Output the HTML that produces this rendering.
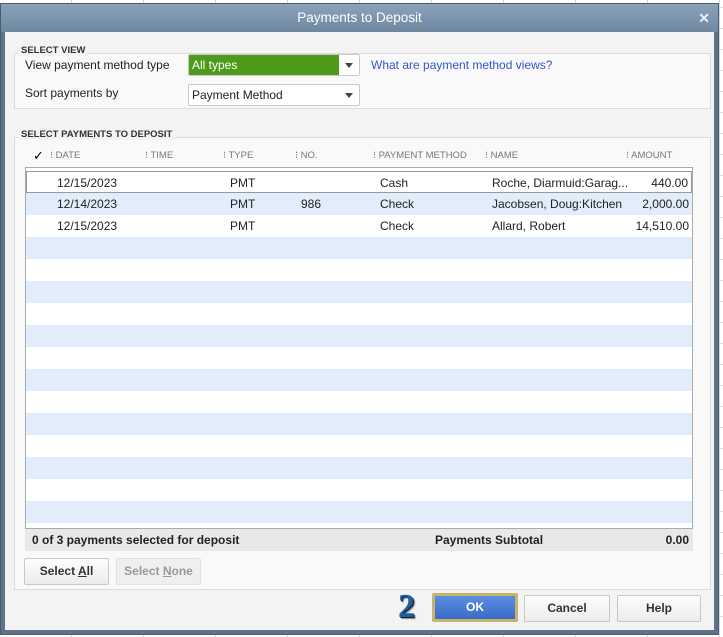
<!DOCTYPE html>
<html><head><style>
*{box-sizing:border-box;margin:0;padding:0}
body{width:723px;height:637px;background:#fff;font-family:"Liberation Sans",Arial,sans-serif;font-size:12px;color:#222;position:relative;overflow:hidden}
.bg{position:absolute;inset:0;background:
repeating-linear-gradient(90deg,transparent 0 71px,#d8d8d8 71px 72px),
repeating-linear-gradient(0deg,transparent 0 20px,#e0e0e0 20px 21px),#fff}
.dlg{position:absolute;left:0;top:3px;width:719px;height:632px;background:#5e7288;border:1px solid #4a5c70}
.title{position:absolute;left:0;top:0;width:100%;height:28px;background:linear-gradient(#8aa3bb,#6f879f);color:#fff;text-align:center;font-size:13.5px;line-height:28px}
.x{position:absolute;right:8px;top:0;font-weight:bold;font-size:14px;color:#e8eef4}
.body{position:absolute;left:4px;top:28px;right:4px;bottom:4px;background:#f3f3f3}
.panel{position:absolute;border:1px solid #dcdcdc;background:#f9f9f9}
.lbl{position:absolute;font-size:9.5px;font-weight:bold;color:#333;background:#f3f3f3;padding:0 3px}
.sel{position:absolute;height:22px;border:1px solid #c8c8c8;background:#fff;border-radius:2px;font-size:12px;line-height:20px;padding-left:3px}
.sel .arr{position:absolute;right:6px;top:8px;width:0;height:0;border-left:4px solid transparent;border-right:4px solid transparent;border-top:5px solid #444}
.hdr{position:absolute;top:150px;font-size:9.5px;color:#777}
.grid{position:absolute;left:25px;top:167px;width:668px;height:362px;border:1px solid #aaa;background:repeating-linear-gradient(#fff 0 4px,#fff 4px 26px,#e1edfb 26px 48px,#fff 48px 48px);overflow:hidden}
.row{position:absolute;left:0;width:100%;height:22px;font-size:12px;line-height:22px}
.row span{position:absolute}
.foot{position:absolute;left:25px;top:529px;width:668px;height:22px;background:#e8e8e8;font-weight:bold;font-size:12px;line-height:22px}
.btn{position:absolute;height:27px;border:1px solid #c8c8c8;border-radius:2px;background:linear-gradient(#fdfdfd,#ececec);text-align:center;line-height:25px;font-size:12px;font-weight:bold;color:#333}
</style></head><body>
<div class="bg"></div>
<div class="dlg">
<div class="title">Payments to Deposit<span class="x">✕</span></div>
<div class="body">
<div class="panel" style="left:9px;top:21px;width:697px;height:56px"></div>
<div class="lbl" style="left:13px;top:13px">SELECT VIEW</div>
<div class="panel" style="left:9px;top:105px;width:697px;height:453px"></div>
<div class="lbl" style="left:13px;top:97px">SELECT PAYMENTS TO DEPOSIT</div>
</div>
</div>
<div style="position:absolute;left:25px;top:58px;font-size:12px">View payment method type</div>
<div class="sel" style="left:188px;top:54px;width:172px;background:#4e9a1a;color:#fff"><span style="background:#4e9a1a">All types</span><span style="position:absolute;right:0;top:0;width:20px;height:20px;background:#fff"></span><span class="arr"></span></div>
<div style="position:absolute;left:371px;top:58px;color:#3355cc">What are payment method views?</div>
<div style="position:absolute;left:25px;top:86px">Sort payments by</div>
<div class="sel" style="left:188px;top:84px;width:172px">Payment Method<span class="arr"></span></div>
<div class="hdr" style="left:33px;top:148px;font-size:13px;color:#000">✓</div>
<div class="hdr" style="left:50px">⁝ DATE</div>
<div class="hdr" style="left:145px">⁝ TIME</div>
<div class="hdr" style="left:223px">⁝ TYPE</div>
<div class="hdr" style="left:295px">⁝ NO.</div>
<div class="hdr" style="left:373px">⁝ PAYMENT METHOD</div>
<div class="hdr" style="left:485px">⁝ NAME</div>
<div class="hdr" style="left:626px">⁝ AMOUNT</div>
<div class="grid" style="background:repeating-linear-gradient(#fff 0 4px,#fff 4px 25px,#e1edfb 25px 47px,#fff 47px 48px);background:linear-gradient(#fff,#fff) 0 0/100% 25px no-repeat,repeating-linear-gradient(#e1edfb 0 22px,#fff 22px 44px) 0 25px/100% 100% no-repeat">
<div class="row" style="top:3px;border:1px solid #999;height:22px"><span style="left:30px">12/15/2023</span><span style="left:203px">PMT</span><span style="left:353px">Cash</span><span style="left:465px">Roche, Diarmuid:Garag...</span><span style="right:3px">440.00</span></div>
<div class="row" style="top:25px"><span style="left:31px">12/14/2023</span><span style="left:204px">PMT</span><span style="left:275px">986</span><span style="left:354px">Check</span><span style="left:466px">Jacobsen, Doug:Kitchen</span><span style="right:3px">2,000.00</span></div>
<div class="row" style="top:47px"><span style="left:31px">12/15/2023</span><span style="left:204px">PMT</span><span style="left:354px">Check</span><span style="left:466px">Allard, Robert</span><span style="right:3px">14,510.00</span></div>
</div>
<div class="foot"><span style="position:absolute;left:7px">0 of 3 payments selected for deposit</span><span style="position:absolute;left:410px">Payments Subtotal</span><span style="position:absolute;right:4px">0.00</span></div>
<div class="btn" style="left:24px;top:558px;width:85px">Select <u>A</u>ll</div>
<div class="btn" style="left:116px;top:558px;width:85px;color:#999;background:#efefef;border-color:#e2e2e2">Select <u>N</u>one</div>
<div style="position:absolute;left:398px;top:587px;font-family:'Liberation Serif',serif;font-weight:bold;font-size:34px;color:#1d5fa0;text-shadow:1px 1px 0 #123,2px 2px 1px #888;line-height:40px">2</div>
<div class="btn" style="left:432px;top:593px;width:86px;height:29px;border:3px solid #c8b46a;background:linear-gradient(#5b8ee0,#3a6bc8);color:#fff;line-height:23px">OK</div>
<div class="btn" style="left:524px;top:595px;width:86px">Cancel</div>
<div class="btn" style="left:617px;top:595px;width:84px">Help</div>
</body></html>
